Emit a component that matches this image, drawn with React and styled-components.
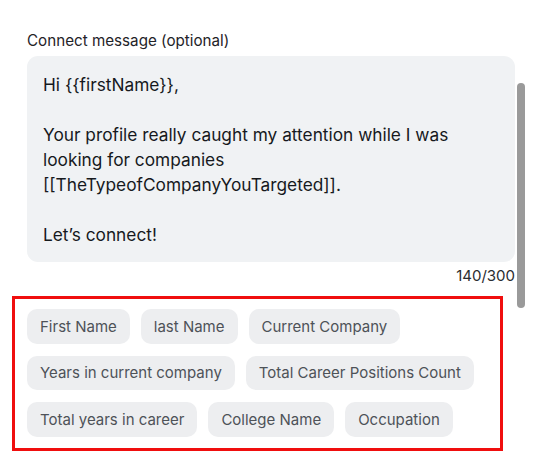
import React from "react";
import styled, { createGlobalStyle } from "styled-components";

const GlobalStyle = createGlobalStyle`
  body {
    margin: 0;
    background: #ffffff;
    font-family: Inter, "Liberation Sans", sans-serif;
  }
`;

const Page = styled.div`
  position: relative;
  width: 555px;
  height: 475px;
  overflow: hidden;
  padding: 31px 0 0 27px;
  box-sizing: border-box;
`;

const Field = styled.div`
  width: 488px;
  display: flex;
  flex-direction: column;
`;

const Label = styled.div`
  font-size: 15.2px;
  color: #1f2328;
  line-height: 20px;
  margin-bottom: 5px;
`;

const MessageBox = styled.div`
  background: #f0f2f4;
  border-radius: 11px;
  padding: 16px 16px 15px 16px;
  font-size: 17.3px;
  line-height: 25px;
  color: #16191d;
  white-space: pre-wrap;
`;

const Counter = styled.div`
  text-align: right;
  font-size: 15px;
  color: #2a2d31;
  margin-top: 4px;
  line-height: 20px;
`;

const ChipsFrame = styled.div`
  margin: 10px 0 0 -15px;
  width: 491px;
  box-sizing: border-box;
  border: 3px solid #f00e0e;
  padding: 10px 12px 11px 12px;
  display: flex;
  flex-wrap: wrap;
  gap: 12px 11px;
`;

const Chip = styled.span`
  display: inline-flex;
  align-items: center;
  height: 34.5px;
  padding: 0 13px;
  border-radius: 10px;
  background: #edeef0;
  color: #4e5258;
  font-size: 15px;
`;

const ScrollThumb = styled.div`
  position: absolute;
  left: 517px;
  top: 83px;
  width: 8px;
  height: 225px;
  border-radius: 4px;
  background: #9a9a9a;
`;

const chips = [
  "First Name",
  "last Name",
  "Current Company",
  "Years in current company",
  "Total Career Positions Count",
  "Total years in career",
  "College Name",
  "Occupation",
];

const message = `Hi {{firstName}},

Your profile really caught my attention while I was looking for companies [[TheTypeofCompanyYouTargeted]].

Let’s connect!`;

export default function App() {
  return (
    <>
      <GlobalStyle />
      <Page>
        <Field>
          <Label>Connect message (optional)</Label>
          <MessageBox>{message}</MessageBox>
          <Counter>140/300</Counter>
          <ChipsFrame>
            {chips.map((c) => (
              <Chip key={c}>{c}</Chip>
            ))}
          </ChipsFrame>
        </Field>
        <ScrollThumb />
      </Page>
    </>
  );
}
